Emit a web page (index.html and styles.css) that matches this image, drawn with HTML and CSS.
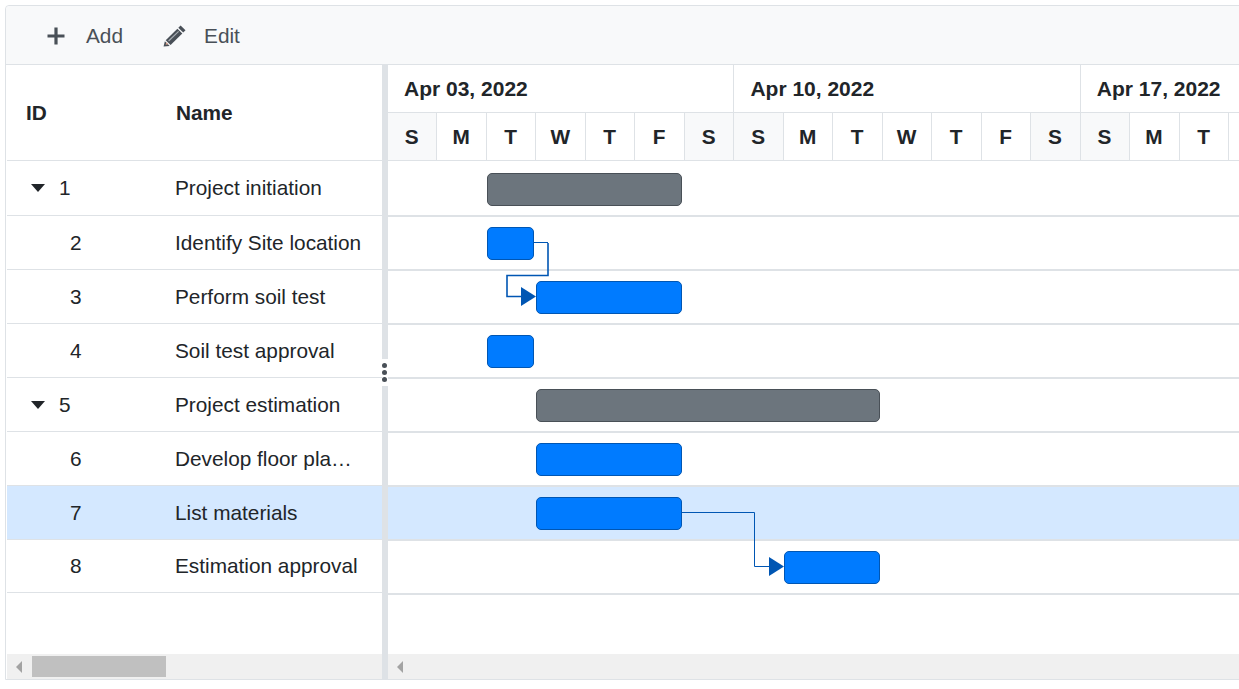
FILE: index.html
```html
<!DOCTYPE html>
<html lang="en">
<head>
    <meta charset="UTF-8">
    <title>Gantt</title>
    <link rel="stylesheet" href="styles.css">
</head>
<body>
    <div class="gantt">
        <div class="toolbar">
            <div class="tool tool-add">
                <svg class="tool-icon" width="18" height="18" viewBox="0 0 18 18">
                    <path d="M9 0.5V17.5M0.5 9H17.5" stroke="#495057" stroke-width="3.2" fill="none"/>
                </svg>
                <span>Add</span>
            </div>
            <div class="tool tool-edit">
                <svg class="tool-icon" width="23" height="22" viewBox="0 0 23 22">
                    <path d="M17.6 0.5L22.5 5.2L20.2 7.5L15.3 2.8Z" fill="#495057"/>
                    <path d="M14.4 3.7L19.3 8.4L7.6 20L2.7 15.3Z" fill="#495057"/>
                    <path d="M1.9 16.2L6.7 20.9L0.6 21.6Z" fill="#495057"/>
                    <path d="M3.4 17.2L5.4 19.2L2.6 19.8Z" fill="#d9a08a"/>
                    <path d="M5.2 15.6L15.2 5.9L16 6.7L6 16.4Z" fill="#a9aeb3"/>
                </svg>
                <span>Edit</span>
            </div>
        </div>

        <div class="panes">
            <div class="grid-pane">
                <div class="grid-head">
                    <div class="head-id">ID</div>
                    <div class="head-name">Name</div>
                </div>
                <div class="grid-body">
                    <div class="grid-row row-first">
                        <div class="cell-id parent"><i class="caret"></i>1</div>
                        <div class="cell-name">Project initiation</div>
                    </div>
                    <div class="grid-row">
                        <div class="cell-id">2</div>
                        <div class="cell-name">Identify Site location</div>
                    </div>
                    <div class="grid-row">
                        <div class="cell-id">3</div>
                        <div class="cell-name">Perform soil test</div>
                    </div>
                    <div class="grid-row">
                        <div class="cell-id">4</div>
                        <div class="cell-name">Soil test approval</div>
                    </div>
                    <div class="grid-row">
                        <div class="cell-id parent"><i class="caret"></i>5</div>
                        <div class="cell-name">Project estimation</div>
                    </div>
                    <div class="grid-row">
                        <div class="cell-id">6</div>
                        <div class="cell-name">Develop floor plan for estimation</div>
                    </div>
                    <div class="grid-row selected">
                        <div class="cell-id">7</div>
                        <div class="cell-name">List materials</div>
                    </div>
                    <div class="grid-row row-last">
                        <div class="cell-id">8</div>
                        <div class="cell-name">Estimation approval</div>
                    </div>
                </div>
                <div class="scrollbar">
                    <i class="scroll-arrow"></i>
                    <div class="scroll-thumb"></div>
                </div>
            </div>

            <div class="splitter">
                <div class="splitter-grip"><b></b><b></b><b></b></div>
            </div>

            <div class="chart-pane">
                <div class="timeline">
                    <div class="weeks">
                        <div class="week">Apr 03, 2022</div>
                        <div class="week">Apr 10, 2022</div>
                        <div class="week">Apr 17, 2022</div>
                    </div>
                    <div class="days">
                        <div class="day off">S</div><div class="day">M</div><div class="day">T</div><div class="day">W</div><div class="day">T</div><div class="day">F</div><div class="day off">S</div>
                        <div class="day off">S</div><div class="day">M</div><div class="day">T</div><div class="day">W</div><div class="day">T</div><div class="day">F</div><div class="day off">S</div>
                        <div class="day off">S</div><div class="day">M</div><div class="day">T</div><div class="day"></div>
                    </div>
                </div>
                <div class="chart-body">
                    <div class="chart-row chart-first"><div class="bar summary" style="margin-left:99px;width:195px"></div></div>
                    <div class="chart-row"><div class="bar" style="margin-left:99px;width:47px"></div></div>
                    <div class="chart-row"><div class="bar" style="margin-left:148px;width:146px"></div></div>
                    <div class="chart-row"><div class="bar" style="margin-left:99px;width:47px"></div></div>
                    <div class="chart-row"><div class="bar summary" style="margin-left:148px;width:344px"></div></div>
                    <div class="chart-row"><div class="bar" style="margin-left:148px;width:146px"></div></div>
                    <div class="chart-row selected"><div class="bar" style="margin-left:148px;width:146px"></div></div>
                    <div class="chart-row"><div class="bar" style="margin-left:396px;width:96px"></div></div>

                    <!-- dependency lines, origin is the top left of the chart body -->
                    <svg class="links" width="851" height="493" viewBox="0 0 851 493">
                        <path d="M146 81.5H160" stroke="#0056b3" stroke-width="1" fill="none"/>
                        <path d="M160 82V114.5H119V135.5H134" stroke="#0056b3" stroke-width="1.6" fill="none"/>
                        <path d="M133 126L148 135.5L133 145Z" fill="#0056b3"/>
                        <path d="M294 351.5H366.5V405.5H382" stroke="#0056b3" stroke-width="1" fill="none"/>
                        <path d="M381 396L396 405.5L381 415Z" fill="#0056b3"/>
                    </svg>
                </div>
                <div class="scrollbar">
                    <i class="scroll-arrow"></i>
                </div>
            </div>
        </div>
    </div>
</body>
</html>
```

FILE: styles.css
```css
html, body {
    height: 100%;
}
body {
    margin: 0;
    padding: 5px 0 0 5px;
    box-sizing: border-box;
    overflow: hidden;
    background-color: #fff;
    font-family: "Liberation Sans", Arial, sans-serif;
    font-size: 20.8px;
    color: #212529;
}
.gantt {
    width: 1300px;
    height: 675px;
    box-sizing: border-box;
    display: flex;
    flex-direction: column;
    border: 1px solid #dee2e6;
    border-top-left-radius: 4px;
}

/* toolbar */
.toolbar {
    height: 59px;
    flex: none;
    box-sizing: border-box;
    display: flex;
    align-items: center;
    padding: 1px 0 0 41px;
    background-color: #f8f9fa;
    border-bottom: 1px solid #dee2e6;
    border-top-left-radius: 4px;
    color: #495057;
}
.tool {
    display: flex;
    align-items: center;
}
.tool-add {
    gap: 21px;
    margin-right: 40px;
}
.tool-edit {
    gap: 18px;
}
.tool-icon {
    display: block;
}

.panes {
    flex: 1;
    min-height: 0;
    display: flex;
}

/* left grid */
.grid-pane {
    width: 376px;
    flex: none;
    display: flex;
    flex-direction: column;
}
.grid-head {
    height: 96px;
    flex: none;
    box-sizing: border-box;
    display: grid;
    grid-template-columns: 149px 1fr;
    align-items: center;
    margin-left: 1px;
    border-bottom: 1px solid #dee2e6;
    font-weight: bold;
}
.head-id {
    padding-left: 19px;
}
.head-name {
    padding-left: 20px;
}
.grid-body {
    flex: 1;
    min-height: 0;
}
.grid-row {
    height: 54px;
    box-sizing: border-box;
    display: grid;
    grid-template-columns: 148px minmax(0, 1fr);
    align-items: center;
    margin-left: 1px;
    border-bottom: 1px solid #dee2e6;
}
.row-first {
    height: 55px;
}
.row-last {
    height: 53px;
}
.grid-row.selected {
    background-color: #d4e8ff;
}
.cell-id {
    padding-left: 63px;
}
.cell-id.parent {
    display: flex;
    align-items: center;
    padding-left: 24px;
}
.caret {
    width: 0;
    height: 0;
    margin-right: 14px;
    border-left: 7.5px solid transparent;
    border-right: 7.5px solid transparent;
    border-top: 8px solid #212529;
}
.cell-name {
    padding: 0 20px;
    white-space: nowrap;
    overflow: hidden;
    text-overflow: ellipsis;
}

/* splitter */
.splitter {
    width: 6px;
    flex: none;
    position: relative;
    background-color: #dee2e6;
}
.splitter-grip {
    position: absolute;
    left: 0;
    top: 294px;
    width: 6px;
    height: 27px;
    display: flex;
    flex-direction: column;
    align-items: flex-start;
    justify-content: center;
    gap: 2px;
    background-color: #fff;
}
.splitter-grip b {
    width: 5px;
    height: 5px;
    border-radius: 50%;
    background-color: #495057;
}

/* chart */
.chart-pane {
    flex: 1;
    min-width: 0;
    display: flex;
    flex-direction: column;
}
.timeline {
    height: 96px;
    flex: none;
    box-sizing: border-box;
    border-bottom: 1px solid #dee2e6;
    font-weight: bold;
}
.weeks {
    height: 48px;
    box-sizing: border-box;
    display: flex;
    border-bottom: 1px solid #dee2e6;
}
.week {
    width: 346.4px;
    flex: none;
    box-sizing: border-box;
    padding: 12px 0 0 16px;
    border-right: 1px solid #dee2e6;
    font-size: 21px;
}
.days {
    height: 47px;
    display: flex;
}
.day {
    width: 49.49px;
    flex: none;
    box-sizing: border-box;
    display: flex;
    align-items: center;
    justify-content: center;
    padding-right: 1px;
    border-right: 1px solid #dee2e6;
}
.day.off {
    background-color: #f8f9fa;
}
.chart-body {
    flex: 1;
    min-height: 0;
    position: relative;
}
.chart-row {
    height: 54px;
    box-sizing: border-box;
    padding-top: 10px;
    border-bottom: 2px solid #dee2e6;
}
.chart-first {
    height: 56px;
    padding-top: 12px;
}
.chart-row.selected {
    background-color: #d4e8ff;
}
.bar {
    height: 33px;
    box-sizing: border-box;
    background-color: #007bff;
    border: 1px solid #0056b3;
    border-radius: 5px;
}
.bar.summary {
    background-color: #6c757d;
    border-color: #495057;
}
.links {
    position: absolute;
    left: 0;
    top: 0;
}

/* scrollbars */
.scrollbar {
    height: 25px;
    flex: none;
    display: flex;
    align-items: center;
    background-color: #f0f0f0;
}
.scroll-arrow {
    width: 0;
    height: 0;
    margin-left: 9px;
    border-top: 6px solid transparent;
    border-bottom: 6px solid transparent;
    border-right: 6px solid #a3a3a3;
}
.grid-pane .scrollbar {
    margin-left: 1px;
}
.scroll-thumb {
    width: 134px;
    height: 21px;
    margin-left: 10px;
    background-color: #c0c0c0;
}
```
